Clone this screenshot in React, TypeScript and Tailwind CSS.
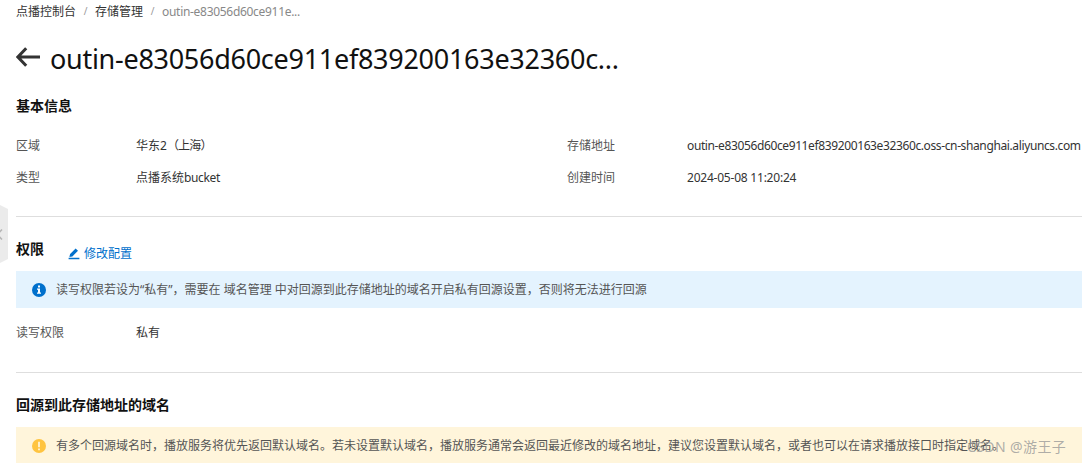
import type { ReactNode } from 'react';

interface FieldProps {
  label: string;
  children: ReactNode;
}

function Field({ label, children }: FieldProps) {
  return (
    <div className="flex h-8 items-center whitespace-nowrap">
      <span className="w-[120px] shrink-0 text-[#555]">{label}</span>
      <span className="text-[#333]">{children}</span>
    </div>
  );
}

function SectionTitle({ children }: { children: ReactNode }) {
  return <h2 className="text-sm leading-5 font-bold text-[#111]">{children}</h2>;
}

function BackIcon() {
  return (
    <svg className="mt-[13px] h-[20px] w-[24px] shrink-0" viewBox="0 0 24 20" fill="none" stroke="#333" strokeWidth="3">
      <path d="M10.2 1.2 1.9 10l8.3 8.8M2 10h22" />
    </svg>
  );
}

function EditIcon() {
  return (
    <svg className="h-3 w-3" viewBox="0 0 12 12" fill="#0070cc">
      <path d="M.6 9.700h10.800v1.500H.6zM1.400 8.900l.7-3L7.600.6l2.400 2.200L4.400 8.400z" />
    </svg>
  );
}

function InfoIcon() {
  return (
    <svg className="mt-px h-[14px] w-[14px] shrink-0" viewBox="0 0 14 14">
      <circle cx="7" cy="7" r="7" fill="#0070cc" />
      <path d="M6 2.6h2v1.8H6zM5 5.6h3v4h1v1.2H5V9.600h1V6.800H5z" fill="#fff" />
    </svg>
  );
}

function WarnIcon() {
  return (
    <svg className="h-[14px] w-[14px] shrink-0" viewBox="0 0 14 14">
      <circle cx="7" cy="7" r="7" fill="#ffc440" />
      <path d="M6.100 2.700h1.800v5.600H6.100zM6.100 9.500h1.800v1.700H6.100z" fill="#fff3d6" />
    </svg>
  );
}

export default function App() {
  return (
    <div className="relative h-[463px] w-[1082px] overflow-hidden bg-white pl-4 font-['Noto_Sans','Noto_Sans_CJK_SC',sans-serif] text-xs">
      <nav className="flex h-[22px] items-center pt-px whitespace-nowrap text-[#333]">
        <span>点播控制台</span>
        <span className="w-[19px] text-center text-[10px] text-[#999]">/</span>
        <span>存储管理</span>
        <span className="w-[19px] text-center text-[10px] text-[#999]">/</span>
        <span className="tracking-[-0.3px] text-[#888]">outin-e83056d60ce911e...</span>
      </nav>

      <header className="flex h-[74px] pt-[12px]">
        <BackIcon />
        <h1 className="ml-[10px] text-[27px] leading-[49px] tracking-[-0.28px] whitespace-nowrap text-[#111]">
          outin-e83056d60ce911ef839200163e32360c...
        </h1>
      </header>

      <section className="h-[121px] border-b border-[#dedede]">
        <SectionTitle>基本信息</SectionTitle>
        <div className="mt-[14px] grid grid-cols-[551px_1fr]">
          <Field label="区域">
            华东2<span className="tracking-[-0.8px]">（上海）</span>
          </Field>
          <Field label="存储地址">
            <span className="tracking-[-0.38px]">outin-e83056d60ce911ef839200163e32360c.oss-cn-shanghai.aliyuncs.com</span>
          </Field>
          <Field label="类型">点播系统<span className="tracking-[-0.35px]">bucket</span></Field>
          <Field label="创建时间">
            <span className="tracking-[-0.22px]">2024-05-08 11:20:24</span>
          </Field>
        </div>
      </section>

      <section className="h-[156px] border-b border-[#dedede] pt-[22px]">
        <div className="flex h-8">
          <SectionTitle>权限</SectionTitle>
          <a className="mt-[5px] ml-6 flex h-5 items-center gap-1 text-[#0070cc]">
            <EditIcon />
            修改配置
          </a>
        </div>
        <div className="flex h-[37px] items-center gap-[10px] bg-[#e4f3fe] pl-4 whitespace-nowrap text-[#555]">
          <InfoIcon />
          <p>读写权限若设为“私有”，需要在 域名管理 中对回源到此存储地址的域名开启私有回源设置，否则将无法进行回源</p>
        </div>
        <div className="mt-[9px]">
          <Field label="读写权限">私有</Field>
        </div>
      </section>

      <section className="pt-[22px]">
        <SectionTitle>回源到此存储地址的域名</SectionTitle>
        <div className="mt-3 flex h-[37px] items-center gap-[10px] bg-[#fff5db] pl-4 whitespace-nowrap text-[#555]">
          <WarnIcon />
          <p>有多个回源域名时，播放服务将优先返回默认域名。若未设置默认域名，播放服务通常会返回最近修改的域名地址，建议您设置默认域名，或者也可以在请求播放接口时指定域名。</p>
        </div>
      </section>

      {/* collapse handle of the side menu */}
      <svg className="absolute top-[205px] left-0 h-[58px] w-2" viewBox="0 0 8 58">
        <path d="M0 0 8 4v50l-8 4z" fill="#ebebeb" />
        <path d="M2 24.500-2.500 29.500 2 34.500" fill="none" stroke="#b5b5b5" strokeWidth="1.500" />
      </svg>

      <span className="absolute top-[436px] left-[967px] text-sm leading-[22px] tracking-[0.4px] whitespace-nowrap text-[#999]/80">CSDN @游王子</span>
    </div>
  );
}
